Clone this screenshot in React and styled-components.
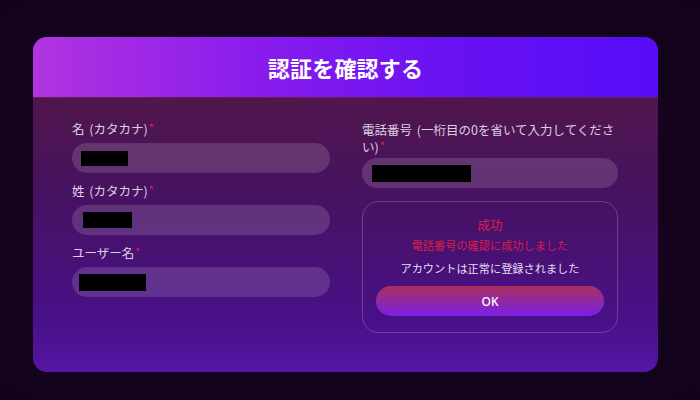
import React from "react";
import styled, { createGlobalStyle } from "styled-components";

const Global = createGlobalStyle`
  html, body { margin: 0; padding: 0; }
  body {
    background: #14031c;
    font-family: "Noto Sans CJK JP", "Noto Sans", sans-serif;
    width: 700px;
    height: 400px;
    overflow: hidden;
  }
`;

const Page = styled.div`
  width: 700px;
  height: 400px;
  box-sizing: border-box;
  padding: 37px 42px 28px 33px;
  background: radial-gradient(ellipse at 50% 50%, #1a0424 0%, #12021a 100%);
`;

const Card = styled.div`
  width: 625px;
  height: 335px;
  border-radius: 14px;
  overflow: hidden;
  display: flex;
  flex-direction: column;
  background: linear-gradient(180deg, #56193f 0%, #47125f 45%, #481088 85%, #5516a6 100%);
`;

const Header = styled.div`
  height: 60px;
  flex: none;
  display: flex;
  align-items: center;
  justify-content: center;
  background: linear-gradient(90deg, #b234e0 0%, #8a1cec 35%, #6a12f2 65%, #560cf8 100%);
  border-bottom: 1px solid #6a1a5a;
`;

const Title = styled.h1`
  margin: 0;
  color: #ffffff;
  font-size: 22px;
  font-weight: 700;
  letter-spacing: 0.2px;
`;

const Body = styled.div`
  display: grid;
  grid-template-columns: 258px 256px;
  column-gap: 32px;
  padding: 23px 40px 0 39px;
`;

const Column = styled.div`
  display: flex;
  flex-direction: column;
  gap: 10px;
`;

const Field = styled.div`
  display: flex;
  flex-direction: column;
  gap: ${(p) => p.$gap ?? 6}px;
`;

const Label = styled.label`
  display: block;
  color: #ddd0e2;
  font-size: 12.5px;
  line-height: ${(p) => p.$lh || 16}px;
  word-spacing: 2px;
`;

const Req = styled.span`
  color: #e0204a;
  font-size: 11px;
  line-height: 0;
  vertical-align: 2px;
  margin-left: 1px;
`;

const Input = styled.div`
  height: 30px;
  border-radius: 15px;
  background: rgba(255, 255, 255, 0.14);
  display: flex;
  align-items: center;
  padding-left: ${(p) => p.$pad}px;
`;

const Redacted = styled.span`
  display: block;
  width: ${(p) => p.$w}px;
  height: ${(p) => p.$h}px;
  background: #000;
`;

const ResultBox = styled.div`
  margin-top: 3px;
  border: 1px solid rgba(255, 255, 255, 0.2);
  border-radius: 16px;
  padding: 14px 13px 16px;
  display: flex;
  flex-direction: column;
  align-items: center;
`;

const Status = styled.div`
  color: #d81e4c;
  font-size: 12.5px;
  line-height: 17px;
`;

const Message = styled.div`
  color: ${(p) => (p.$error ? "#d81e4c" : "#e8dff0")};
  font-size: 11.2px;
  line-height: 17px;
  margin-top: ${(p) => p.$mt}px;
`;

const OkButton = styled.button`
  margin-top: 9px;
  width: 100%;
  height: 30px;
  border: none;
  border-radius: 15px;
  background: linear-gradient(180deg, #a8305c 0%, #8e28a8 55%, #7a20e6 100%);
  color: #fff;
  font-family: "Noto Sans", "Noto Sans CJK JP", sans-serif;
  font-size: 12px;
  font-weight: 500;
  cursor: pointer;
`;

export default function App() {
  return (
    <>
      <Global />
      <Page>
        <Card>
          <Header>
            <Title>認証を確認する</Title>
          </Header>
          <Body>
            <Column>
              <Field>
                <Label>
                  名 (カタカナ)<Req>*</Req>
                </Label>
                <Input $pad={9}>
                  <Redacted $w={47} $h={15} />
                </Input>
              </Field>
              <Field>
                <Label>
                  姓 (カタカナ)<Req>*</Req>
                </Label>
                <Input $pad={11}>
                  <Redacted $w={49} $h={16} />
                </Input>
              </Field>
              <Field>
                <Label>
                  ユーザー名<Req>*</Req>
                </Label>
                <Input $pad={7}>
                  <Redacted $w={67} $h={17} />
                </Input>
              </Field>
            </Column>
            <Column>
              <Field $gap={3}>
                <Label $lh={17}>
                  電話番号 (一桁目の0を省いて入力してください)<Req>*</Req>
                </Label>
                <Input $pad={10}>
                  <Redacted $w={99} $h={17} />
                </Input>
              </Field>
              <ResultBox>
                <Status>成功</Status>
                <Message $error $mt={4}>電話番号の確認に成功しました</Message>
                <Message $mt={6}>アカウントは正常に登録されました</Message>
                <OkButton>OK</OkButton>
              </ResultBox>
            </Column>
          </Body>
        </Card>
      </Page>
    </>
  );
}
